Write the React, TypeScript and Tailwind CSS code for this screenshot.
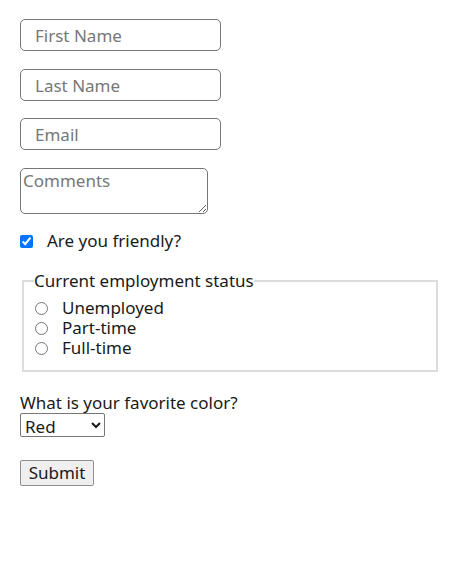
export default function App() {
  return (
    <div className="min-h-screen bg-white text-[#1a1a1a]">
      <form className="flex flex-col items-start px-5 pt-[19px] font-['Noto_Sans',sans-serif] text-[17px]">
        <input
          type="text"
          placeholder="First Name"
          className="w-[201px] h-[32px] rounded-[5px] border border-[#767676] px-[14px] text-[17px] placeholder:text-[#777]"
        />
        <input
          type="text"
          placeholder="Last Name"
          className="mt-[18px] w-[201px] h-[32px] rounded-[5px] border border-[#767676] px-[14px] text-[17px] placeholder:text-[#777]"
        />
        <input
          type="email"
          placeholder="Email"
          className="mt-[17px] w-[201px] h-[32px] rounded-[5px] border border-[#767676] px-[14px] text-[17px] placeholder:text-[#777]"
        />
        <textarea
          placeholder="Comments"
          className="mt-[18px] w-[188px] h-[46px] rounded-[5px] border border-[#767676] px-[2px] pt-[1px] text-[17px] leading-[22px] placeholder:text-[#777]"
        />
        <label className="mt-[17px] flex items-center gap-[14px] leading-[20px]">
          <input type="checkbox" defaultChecked className="w-[13px] h-[13px] m-0 accent-[#0075ff]" />
          <span>Are you friendly?</span>
        </label>
        <fieldset className="mt-[20px] ml-[2px] w-[416px] h-[101px] border-2 border-[#dcdcdc] px-[10px]">
          <legend className="px-0 leading-[20px]">Current employment status</legend>
          <div className="flex flex-col pt-[7px]">
            {["Unemployed", "Part-time", "Full-time"].map((s) => (
              <label key={s} className="flex items-center gap-[14px] leading-[20px]">
                <input type="radio" name="status" className="w-[13px] h-[13px] m-0 ml-[1px]" />
                <span>{s}</span>
              </label>
            ))}
          </div>
        </fieldset>
        <label className="mt-[20px] leading-[21px]">What is your favorite color?</label>
        <select className="w-[85px] h-[24px] border border-[#767676] rounded-[2px] px-0 text-[17px] leading-[20px] appearance-auto">
          <option>Red</option>
          <option>Green</option>
          <option>Blue</option>
        </select>
        <button
          type="button"
          className="mt-[23px] w-[74px] h-[26px] border border-[#8f8f8f] rounded-[2px] bg-[#efefef] text-[17px] leading-[20px]"
        >
          Submit
        </button>
      </form>
    </div>
  )
}
